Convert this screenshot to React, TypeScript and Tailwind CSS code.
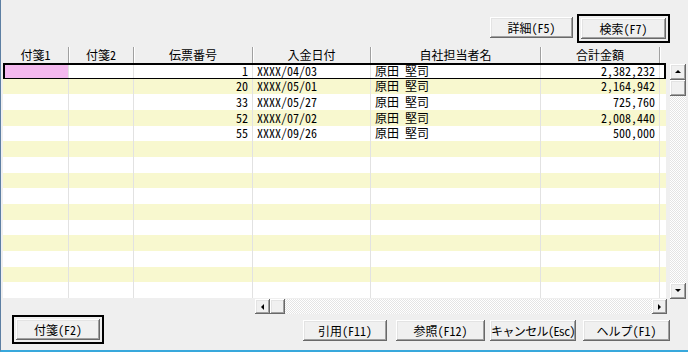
import React from "react";

const cols = [
  { label: "付箋1", w: "w-[66px]" },
  { label: "付箋2", w: "w-[65px]" },
  { label: "伝票番号", w: "w-[119px]" },
  { label: "入金日付", w: "w-[118px]" },
  { label: "自社担当者名", w: "w-[170px]" },
  { label: "合計金額", w: "w-[119px]" },
];

const data: string[][] = [
  ["", "", "1", "XXXX/04/03", "原田　堅司", "2,382,232"],
  ["", "", "20", "XXXX/05/01", "原田　堅司", "2,164,942"],
  ["", "", "33", "XXXX/05/27", "原田　堅司", "725,760"],
  ["", "", "52", "XXXX/07/02", "原田　堅司", "2,008,440"],
  ["", "", "55", "XXXX/09/26", "原田　堅司", "500,000"],
];

const rows: string[][] = Array.from({ length: 15 }, (_, i) => data[i] ?? ["", "", "", "", "", ""]);

const btnFace =
  "flex items-center justify-center whitespace-nowrap bg-[#f0f0f0] text-[12px] leading-none text-black shadow-[inset_-1px_-1px_#696969,inset_1px_1px_#ffffff,inset_-2px_-2px_#a0a0a0,inset_2px_2px_#e3e3e3]";

function Btn({ label, w, extra = "" }: { label: string; w: string; extra?: string }) {
  return <div className={`${btnFace} ${w} ${extra} h-[21px]`}>{label}</div>;
}

function Focus({ children }: { children: React.ReactNode }) {
  return <div className="border-2 border-black p-[2px]">{children}</div>;
}

function Arrow({ dir }: { dir: "up" | "down" | "left" | "right" }) {
  const pts =
    dir === "up"
      ? "1,5 4,2 7,5"
      : dir === "down"
      ? "1,2 4,5 7,2"
      : dir === "left"
      ? "5,1 2,4 5,7"
      : "2,1 5,4 2,7";
  return (
    <svg width="8" height="8" viewBox="0 0 8 8">
      <polygon points={pts} fill="#000" />
    </svg>
  );
}

const track =
  "bg-[repeating-conic-gradient(#ffffff_0_25%,#e4e4e4_0_50%)] bg-[length:2px_2px]";

export default function App() {
  return (
    <div className="w-[688px] h-[352px] bg-[#efefef] border-l border-l-[#5d7fa3] border-b-2 border-b-[#38a8dc] flex flex-col font-['Noto_Sans_CJK_JP',sans-serif] [font-feature-settings:'hwid'] text-[12px] text-black overflow-hidden">
      {/* top buttons */}
      <div className="h-[47px] flex items-start justify-end pt-[14px] pr-[18px] gap-[4px]">
        <div className="mt-[3px]">
          <Btn label="詳細(F5)" w="w-[83px]" />
        </div>
        <Focus>
          <Btn label="検索(F7)" w="w-[85px]" />
        </Focus>
      </div>

      {/* grid + vertical scrollbar */}
      <div className="h-[252px] flex">
        <div className="ml-[2px] w-[663px] flex flex-col">
          {/* header */}
          <div className="h-[16px] flex">
            {cols.map((c) => (
              <div
                key={c.label}
                className={`${c.w} h-full flex items-center justify-center border-r border-r-[#a0a0a0] shadow-[1px_0_#ffffff] leading-none`}
              >
                {c.label}
              </div>
            ))}
          </div>
          {/* body */}
          <div className="flex flex-col">
            {rows.map((r, i) => (
              <div
                key={i}
                className={`relative h-[15.67px] flex leading-none ${
                  i % 2 === 1 ? "bg-[#f8f8cf]" : "bg-white"
                }`}
              >
                {cols.map((c, j) => (
                  <div
                    key={j}
                    className={`${c.w} h-full flex items-center whitespace-nowrap border-r border-r-[#e2e2e2] ${
                      j === 2 || j === 5 ? "justify-end pr-[4px]" : "justify-start pl-[4px]"
                    } ${i === 0 && j === 0 ? "bg-[#f4b8ee]" : ""}`}
                  >
                    {r[j]}
                  </div>
                ))}
                <div className="flex-1 h-full" />
                {i === 0 && (
                  <div className="absolute left-0 right-0 top-0 -bottom-[1px] border-2 border-black pointer-events-none" />
                )}
              </div>
            ))}
          </div>
        </div>
        {/* vertical scrollbar */}
        <div className="ml-[4px] mt-[17px] w-[16px] h-[235px] flex flex-col">
          <div className={`${btnFace} h-[16px]`}>
            <Arrow dir="up" />
          </div>
          <div className={`${btnFace} h-[16px]`} />
          <div className={`flex-1 ${track}`} />
          <div className={`${btnFace} h-[16px]`}>
            <Arrow dir="down" />
          </div>
        </div>
      </div>

      {/* horizontal scrollbar */}
      <div className="h-[15px] flex">
        <div className="ml-[254px] w-[412px] h-full flex">
          <div className={`${btnFace} w-[15px] h-full`}>
            <Arrow dir="left" />
          </div>
          <div className={`${btnFace} w-[15px] h-full`} />
          <div className={`flex-1 ${track}`} />
          <div className={`${btnFace} w-[15px] h-full`}>
            <Arrow dir="right" />
          </div>
        </div>
      </div>

      {/* bottom buttons */}
      <div className="flex-1 flex items-start pl-[11px] pr-[18px]">
        <div className="mt-[1px]">
          <Focus>
            <Btn label="付箋(F2)" w="w-[84px]" />
          </Focus>
        </div>
        <div className="ml-auto mt-[6px] flex">
          <Btn label="引用(F11)" w="w-[84px]" />
          <Btn label="参照(F12)" w="w-[89px]" extra="ml-[9px]" />
          <Btn label="キャンセル(Esc)" w="w-[86px]" extra="ml-[5px] tracking-[-0.6px]" />
          <Btn label="ヘルプ(F1)" w="w-[87px]" extra="ml-[7px]" />
        </div>
      </div>
    </div>
  );
}
